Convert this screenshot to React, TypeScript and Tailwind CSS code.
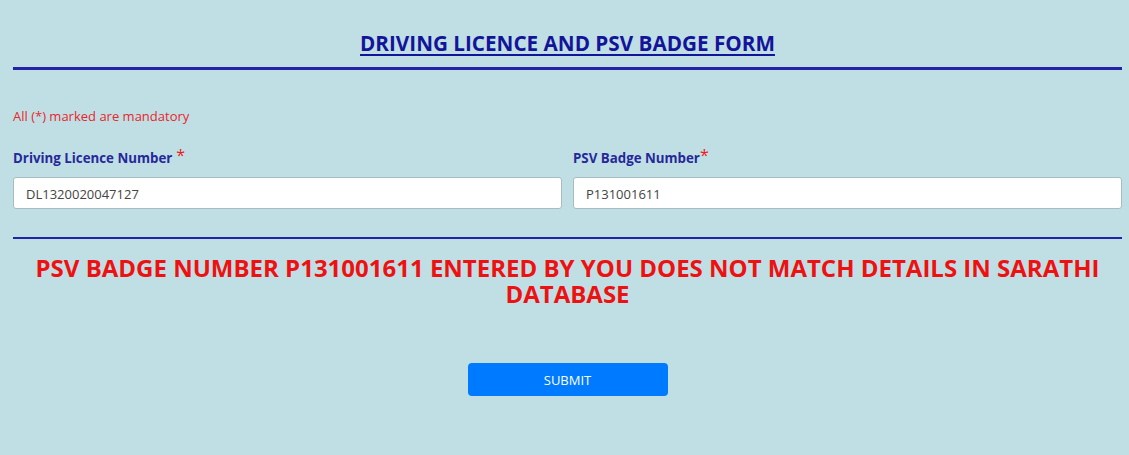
export default function App() {
  return (
    <div className="min-h-[455px] w-full bg-[#c0dfe5] pl-[13px] pr-[7px] pt-[29px]" style={{ fontFamily: '"Open Sans", "Noto Sans", sans-serif' }}>
      <h1 className="text-center text-[20.7px] font-bold leading-[28px] text-[#14149a] underline underline-offset-[3px] decoration-[2px]">
        DRIVING LICENCE AND PSV BADGE FORM
      </h1>
      <div className="mt-[10px] h-[3px] bg-[#2323a8]" />
      <p className="mt-[37px] text-[13px] leading-[18px] text-[#e8262b]">All (*) marked are mandatory</p>
      <div className="mt-[24px] grid grid-cols-2 gap-[11px]">
        <div>
          <label className="flex items-start text-[13.3px] font-bold leading-[18px] text-[#26289a]">
            Driving Licence Number<span className="ml-[4px] -mt-[3px] text-[16px] font-normal text-[#f01818]">*</span>
          </label>
          <input readOnly value="DL1320020047127" className="mt-[10px] block h-[32px] w-full rounded-[3px] border border-[#a8bcc4] bg-white px-[12px] pt-[2px] text-[13px] text-[#444] outline-none" />
        </div>
        <div>
          <label className="flex items-start text-[13.3px] font-bold leading-[18px] text-[#26289a]">
            PSV Badge Number<span className="-mt-[3px] text-[16px] font-normal text-[#f01818]">*</span>
          </label>
          <input readOnly value="P131001611" className="mt-[10px] block h-[32px] w-full rounded-[3px] border border-[#a8bcc4] bg-white px-[12px] pt-[2px] text-[13px] text-[#444] outline-none" />
        </div>
      </div>
      <div className="mt-[28px] h-[2px] bg-[#2323a8]" />
      <p className="mt-[16px] px-[10px] text-center text-[24px] font-bold leading-[26px] text-[#ee1111]">
        PSV BADGE NUMBER P131001611 ENTERED BY YOU DOES NOT MATCH DETAILS IN SARATHI DATABASE
      </p>
      <div className="mt-[56px] flex justify-center">
        <button className="h-[33px] w-[200px] rounded-[4px] bg-[#007bff] pt-[2px] text-[13px] text-white">SUBMIT</button>
      </div>
    </div>
  );
}
